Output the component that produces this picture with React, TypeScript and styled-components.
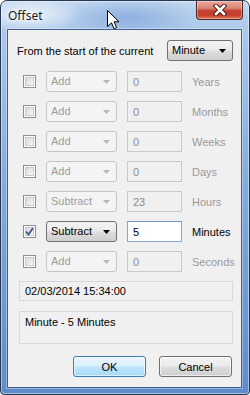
import React from 'react'
import styled, { createGlobalStyle, css } from 'styled-components'

const GlobalStyle = createGlobalStyle`
  html, body {
    margin: 0;
    padding: 0;
    background: #ffffff;
  }
  body {
    font-family: "Liberation Sans", Arial, sans-serif;
    font-size: 11px;
    color: #000;
  }
`

type Unit = {
  op: string
  value: string
  label: string
  checked?: boolean
  enabled?: boolean
}

const units: Unit[] = [
  { op: 'Add', value: '0', label: 'Years' },
  { op: 'Add', value: '0', label: 'Months' },
  { op: 'Add', value: '0', label: 'Weeks' },
  { op: 'Add', value: '0', label: 'Days' },
  { op: 'Subtract', value: '23', label: 'Hours' },
  { op: 'Subtract', value: '5', label: 'Minutes', checked: true, enabled: true },
  { op: 'Add', value: '0', label: 'Seconds' },
]

const Arrow = ({ disabled }: { disabled?: boolean }) => (
  <svg width="7" height="4" viewBox="0 0 7 4">
    <path d="M0 0 H7 L3.5 4 Z" fill={disabled ? '#b8b8b8' : '#000'} />
  </svg>
)

const Tick = () => (
  <svg width="9" height="9" viewBox="0 0 9 9">
    <path d="M1 4.5 L3.5 7.5 L8 1" fill="none" stroke="#3a5694" strokeWidth="1.8" />
  </svg>
)

const CloseX = () => (
  <svg width="14" height="12" viewBox="0 0 14 12">
    <path d="M3 2 L11 10 M11 2 L3 10" stroke="#5a1c12" strokeWidth="4.6" strokeLinecap="square" />
    <path d="M3 2 L11 10 M11 2 L3 10" stroke="#ffffff" strokeWidth="2.6" strokeLinecap="square" />
  </svg>
)

const Cursor = () => (
  <CursorWrap>
    <svg width="13" height="20" viewBox="0 0 13 20">
      <path
        d="M0.5 0.5 L0.5 16.5 L4.5 12.8 L7 18.8 L9.6 17.7 L7.1 11.8 L12 11.8 Z"
        fill="#ffffff"
        stroke="#000000"
        strokeWidth="1"
        strokeLinejoin="miter"
      />
    </svg>
  </CursorWrap>
)

const App = () => {
  return (
    <>
      <GlobalStyle />
      <Window>
        <TitleBar>
          <Title>Offset</Title>
          <CloseButton>
            <CloseX />
          </CloseButton>
        </TitleBar>
        <Client>
          <Header>
            <HeaderText>From the start of the current</HeaderText>
            <Combo $width={66}>
              <span>Minute</span>
              <Arrow />
            </Combo>
          </Header>
          <Rows>
            {units.map((u) => (
              <Row key={u.label}>
                <Check>{u.checked && <Tick />}</Check>
                <Combo $disabled={!u.enabled} $width={71}>
                  <span>{u.op}</span>
                  <Arrow disabled={!u.enabled} />
                </Combo>
                <TextBox $disabled={!u.enabled}>{u.value}</TextBox>
                <UnitLabel $disabled={!u.enabled}>{u.label}</UnitLabel>
              </Row>
            ))}
          </Rows>
          <DateBox>02/03/2014 15:34:00</DateBox>
          <Memo>Minute - 5 Minutes</Memo>
          <Buttons>
            <Button $default>OK</Button>
            <Button>Cancel</Button>
          </Buttons>
        </Client>
        <Cursor />
      </Window>
    </>
  )
}

export default App

const CursorWrap = styled.div`
  position: absolute;
  left: 106px;
  top: 9px;
  width: 13px;
  height: 20px;
  line-height: 0;
`

const Window = styled.div`
  position: relative;
  width: 250px;
  height: 395px;
  box-sizing: border-box;
  border: 1px solid #26374f;
  border-radius: 7px 7px 4px 4px;
  padding: 0 7px 6px 6px;
  display: flex;
  flex-direction: column;
  overflow: hidden;
  background:
    radial-gradient(ellipse 55px 18px at 28px 14px, rgba(255, 255, 255, 0.75), rgba(255, 255, 255, 0)),
    radial-gradient(ellipse 70px 22px at 128px 16px, rgba(70, 120, 200, 0.35), rgba(70, 120, 200, 0)),
    linear-gradient(180deg, #c3d8f0 0%, #aac7ea 8%, #86acdd 45%, #5f8bcb 100%);
  box-shadow: inset 0 0 0 1px rgba(255, 255, 255, 0.45);
`

const TitleBar = styled.div`
  height: 28px;
  flex: none;
  display: flex;
  justify-content: space-between;
  align-items: flex-start;
`

const Title = styled.div`
  font-family: "Noto Sans", "Open Sans", sans-serif;
  font-size: 12px;
  color: #1a1a1a;
  padding: 6px 0 0 1px;
  text-shadow: 0 0 6px rgba(255, 255, 255, 0.9), 0 0 3px rgba(255, 255, 255, 0.9);
`

const CloseButton = styled.div`
  width: 47px;
  height: 19px;
  margin-right: -1px;
  box-sizing: border-box;
  border: 1px solid #4b2a26;
  border-top: none;
  border-radius: 0 0 4px 4px;
  display: flex;
  align-items: center;
  justify-content: center;
  background: linear-gradient(180deg, #e9a99a 0%, #d98373 40%, #c2402e 55%, #c8412d 80%, #dc7a5a 100%);
  box-shadow: inset 0 0 0 1px rgba(255, 255, 255, 0.35);
`

const Client = styled.div`
  flex: 1;
  box-sizing: border-box;
  border: 1px solid #3f5f8c;
  background: #f0f0f0;
  padding: 10px 8px 10px 9px;
  display: flex;
  flex-direction: column;
  box-shadow: 0 0 0 1px rgba(255, 255, 255, 0.35);
`

const Header = styled.div`
  height: 21px;
  display: flex;
  align-items: center;
  justify-content: space-between;
  margin-bottom: 10px;
`

const HeaderText = styled.span`
  color: #000;
`

const Rows = styled.div`
  display: flex;
  flex-direction: column;
  gap: 9px;
  padding-left: 6px;
`

const Row = styled.div`
  height: 21px;
  display: grid;
  grid-template-columns: 13px 71px 55px auto;
  column-gap: 10px;
  align-items: center;
`

const Check = styled.span`
  width: 13px;
  height: 13px;
  box-sizing: border-box;
  border: 1px solid #8f8f8f;
  background: #fff;
  display: flex;
  align-items: center;
  justify-content: center;
  box-shadow: inset 0 0 0 1px #fff, inset 0 0 0 2px #c9c9c9;
  background-image: linear-gradient(135deg, #d6d6d6 10%, #fbfbfb 90%);
`

const Combo = styled.div<{ $disabled?: boolean; $width: number }>`
  width: ${(p) => p.$width}px;
  height: 21px;
  box-sizing: border-box;
  border-radius: 3px;
  padding: 0 6px 0 4px;
  display: flex;
  align-items: center;
  justify-content: space-between;
  line-height: 1;
  ${(p) =>
    p.$disabled
      ? css`
          border: 1px solid #c6c6c6;
          background: #f4f4f4;
          color: #9c9c9c;
        `
      : css`
          border: 1px solid #707070;
          background: linear-gradient(180deg, #f3f3f3 0%, #ebebeb 48%, #dddddd 52%, #cfcfcf 100%);
          color: #000;
        `}
`

const TextBox = styled.div<{ $disabled?: boolean }>`
  height: 21px;
  box-sizing: border-box;
  padding: 0 5px;
  display: flex;
  align-items: center;
  ${(p) =>
    p.$disabled
      ? css`
          border: 1px solid #c9c9c9;
          background: #f0f0f0;
          color: #8c8c8c;
        `
      : css`
          border: 1px solid #86a9d4;
          border-top-color: #6f96c8;
          background: #ffffff;
          color: #000;
        `}
`

const UnitLabel = styled.span<{ $disabled?: boolean }>`
  color: ${(p) => (p.$disabled ? '#9a9a9a' : '#000')};
`

const DateBox = styled.div`
  height: 20px;
  box-sizing: border-box;
  margin: 9px 0 0 2px;
  padding: 0 5px;
  display: flex;
  align-items: center;
  border: 1px solid #d8d8d8;
  background: #f0f0f0;
`

const Memo = styled.div`
  height: 33px;
  box-sizing: border-box;
  margin: 10px 0 0 2px;
  padding: 4px 5px;
  border: 1px solid #d8d8d8;
  background: #f0f0f0;
`

const Buttons = styled.div`
  display: flex;
  justify-content: flex-end;
  gap: 13px;
  margin-top: 12px;
  padding-right: 1px;
`

const Button = styled.div<{ $default?: boolean }>`
  width: 73px;
  height: 21px;
  box-sizing: border-box;
  border-radius: 3px;
  display: flex;
  align-items: center;
  justify-content: center;
  color: #000;
  ${(p) =>
    p.$default
      ? css`
          border: 1px solid #3c7fb1;
          background: linear-gradient(180deg, #eaf6fd 0%, #d9f0fc 48%, #bee6fd 52%, #a7d9f5 100%);
          box-shadow: inset 0 0 0 1px rgba(255, 255, 255, 0.6);
        `
      : css`
          border: 1px solid #707070;
          background: linear-gradient(180deg, #f3f3f3 0%, #ebebeb 48%, #dddddd 52%, #cfcfcf 100%);
          box-shadow: inset 0 0 0 1px rgba(255, 255, 255, 0.6);
        `}
`
